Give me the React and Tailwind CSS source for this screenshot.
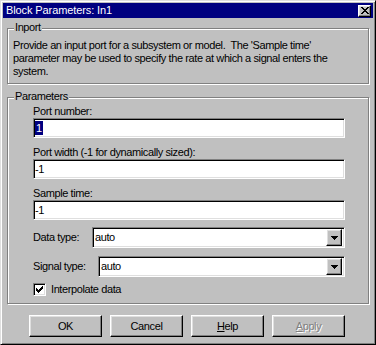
import React from "react";

const font = { fontFamily: '"Liberation Sans", Arial, sans-serif' };

const sunken =
  "border border-t-[#808080] border-l-[#808080] border-r-white border-b-white shadow-[inset_1px_1px_0_#000,inset_-1px_-1px_0_#dfdfdf]";
const raised =
  "border border-t-white border-l-white border-r-black border-b-black shadow-[inset_-1px_-1px_0_#808080,inset_1px_1px_0_#dfdfdf]";

function Group({ title, className, children }) {
  return (
    <div
      className={`relative ml-[4px] w-[362px] border border-[#808080] shadow-[inset_1px_1px_0_#fff,1px_1px_0_#fff] ${className}`}
    >
      <span className="absolute left-[6px] top-[-8px] bg-[#c0c0c0] px-[1px] text-[11px] leading-[13px] text-black">
        {title}
      </span>
      {children}
    </div>
  );
}

function Field({ label, children, className = "" }) {
  return (
    <div className={className}>
      <div className="h-[13px] whitespace-nowrap text-[11px] leading-[13px]">{label}</div>
      <div className={`flex h-[20px] w-full items-center bg-white pl-[1px] text-[11px] ${sunken}`}>
        {children}
      </div>
    </div>
  );
}

function Select({ label, labelWidth, className = "" }) {
  return (
    <div className={`flex items-center ${className}`}>
      <div className="text-[11px] leading-[13px]" style={{ width: labelWidth }}>
        {label}
      </div>
      <div className={`flex h-[21px] flex-1 items-center justify-between bg-white pl-[2px] pr-[2px] text-[11px] ${sunken}`}>
        <span>auto</span>
        <div className={`flex h-[17px] w-[16px] items-center justify-center bg-[#c0c0c0] ${raised}`}>
          <svg width="7" height="4" viewBox="0 0 7 4">
            <path d="M0 0h7v1H0zM1 1h5v1H1zM2 2h3v1H2zM3 3h1v1H3z" fill="#000" />
          </svg>
        </div>
      </div>
    </div>
  );
}

function Button({ children, disabled }) {
  return (
    <div
      className={`flex h-[22px] w-[73px] items-center justify-center bg-[#c0c0c0] text-[11px] ${raised} ${
        disabled ? "text-[#808080] [text-shadow:1px_1px_0_#fff]" : "text-black"
      }`}
    >
      {children}
    </div>
  );
}

export default function App() {
  return (
    <div
      style={font}
      className="h-[345px] w-[376px] border border-b-black border-l-[#dfdfdf] border-r-black border-t-[#dfdfdf] bg-[#c0c0c0] p-[2px] tracking-[-0.4px] text-black shadow-[inset_1px_1px_0_#fff,inset_-1px_-1px_0_#808080]"
    >
      <div className="flex h-[15px] items-center justify-between bg-[#000080] pl-[3px] pr-[2px]">
        <span className="text-[11px] leading-[13px] tracking-[-0.1px] text-white">Block Parameters: In1</span>
        <div className={`flex h-[12px] w-[13px] items-center justify-center bg-[#c0c0c0] ${raised}`}>
          <svg width="8" height="7" viewBox="0 0 8 7">
            <path
              d="M0 0h2v1H0zM6 0h2v1H6zM1 1h2v1H1zM5 1h2v1H5zM2 2h4v1H2zM3 3h2v1H3zM2 4h4v1H2zM1 5h2v1H1zM5 5h2v1H5zM0 6h2v1H0zM6 6h2v1H6z"
              fill="#000"
            />
          </svg>
        </div>
      </div>

      <Group title="Inport" className="mt-[10px] h-[56px] pl-[5px] pt-[10px]">
        <div className="whitespace-nowrap text-[11px] leading-[13px]">
          <div>Provide an input port for a subsystem or model.&nbsp; The 'Sample time'</div>
          <div>parameter may be used to specify the rate at which a signal enters the</div>
          <div>system.</div>
        </div>
      </Group>

      <Group title="Parameters" className="mt-[13px] h-[207px] pl-[25px] pr-[23px] pt-[7px]">
        <Field label="Port number:">
          <span className="bg-[#000080] px-[1px] leading-[14px] text-white">1</span>
        </Field>
        <Field label="Port width (-1 for dynamically sized):" className="mt-[8px]">
          <span>-1</span>
        </Field>
        <Field label="Sample time:" className="mt-[8px]">
          <span>-1</span>
        </Field>
        <Select label="Data type:" labelWidth={59} className="mt-[7px]" />
        <Select label="Signal type:" labelWidth={65} className="mt-[8px]" />
        <div className="mt-[6px] flex items-center">
          <div className={`flex h-[13px] w-[13px] items-center justify-center bg-white ${sunken}`}>
            <svg width="7" height="7" viewBox="0 0 7 7">
              <path d="M6 0h1v3H6zM5 1h1v3H5zM4 2h1v3H4zM3 3h1v3H3zM2 4h1v3H2zM1 3h1v3H1zM0 2h1v3H0z" fill="#000" />
            </svg>
          </div>
          <span className="ml-[5px] text-[11px] leading-[13px]">Interpolate data</span>
        </div>
      </Group>

      <div className="mt-[11px] flex gap-[8px] pl-[26px]">
        <Button>OK</Button>
        <Button>Cancel</Button>
        <Button>
          <span>
            <u>H</u>elp
          </span>
        </Button>
        <Button disabled>
          <span>
            <u>A</u>pply
          </span>
        </Button>
      </div>
    </div>
  );
}
